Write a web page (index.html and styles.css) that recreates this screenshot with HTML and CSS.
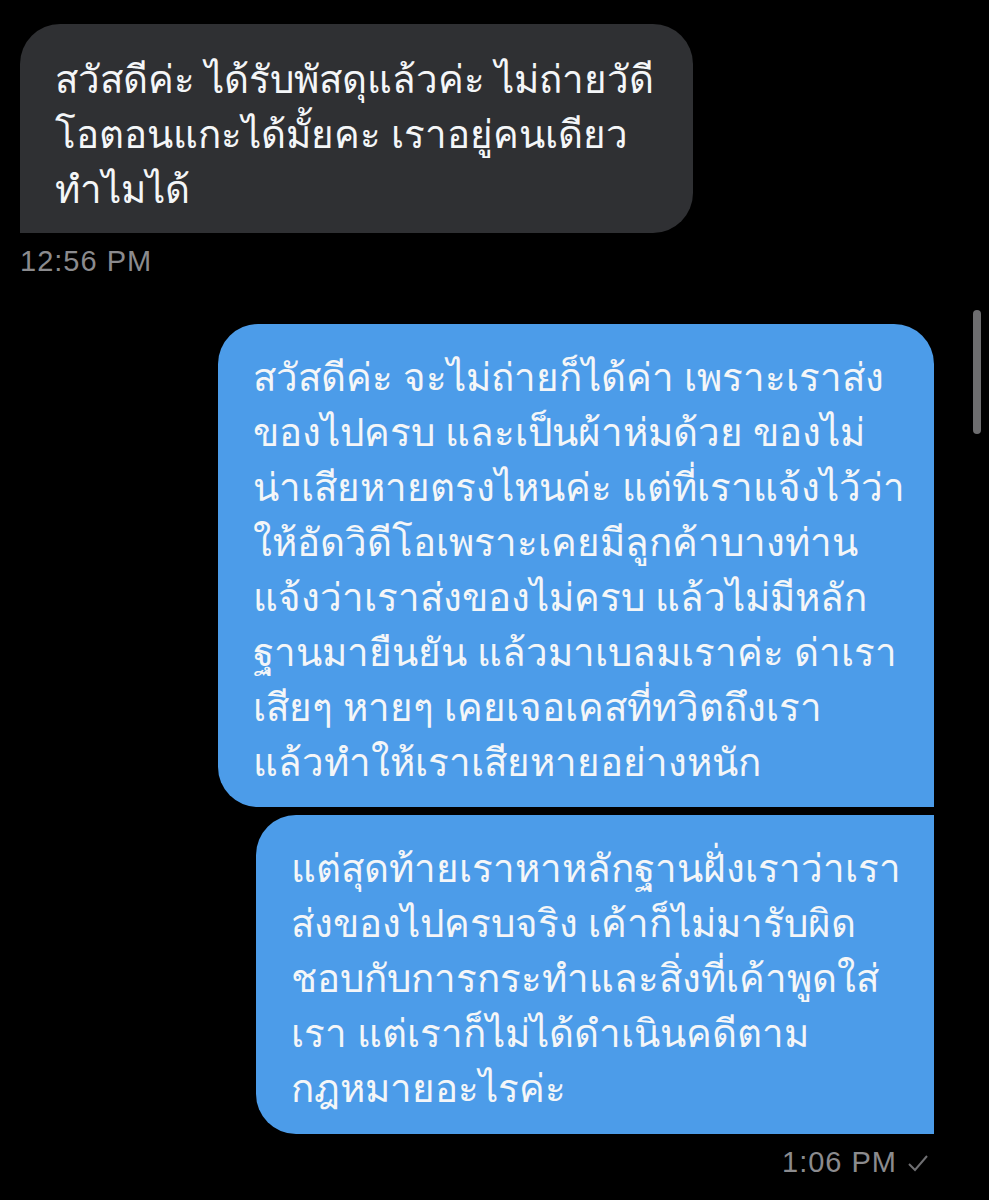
FILE: index.html
```html
<!DOCTYPE html>
<html lang="th">
<head>
    <meta charset="UTF-8">
    <meta name="viewport" content="width=device-width, initial-scale=1.0">
    <title>ข้อความ</title>
    <link rel="stylesheet" href="styles.css">
</head>
<body>
    <div class="chat">
        <div class="msg msg-in">
            <div class="bubble bubble-in">
                สวัสดีค่ะ ได้รับพัสดุแล้วค่ะ ไม่ถ่ายวัดี<br>
                โอตอนแกะได้มั้ยคะ เราอยู่คนเดียว<br>
                ทำไมได้
            </div>
            <div class="time">12:56 PM</div>
        </div>

        <div class="msg msg-out">
            <div class="bubble bubble-out first">
                สวัสดีค่ะ จะไม่ถ่ายก็ได้ค่า เพราะเราส่ง<br>
                ของไปครบ และเป็นผ้าห่มด้วย ของไม่<br>
                น่าเสียหายตรงไหนค่ะ แต่ที่เราแจ้งไว้ว่า<br>
                ให้อัดวิดีโอเพราะเคยมีลูกค้าบางท่าน<br>
                แจ้งว่าเราส่งของไม่ครบ แล้วไม่มีหลัก<br>
                ฐานมายืนยัน แล้วมาเบลมเราค่ะ ด่าเรา<br>
                เสียๆ หายๆ เคยเจอเคสที่ทวิตถึงเรา<br>
                แล้วทำให้เราเสียหายอย่างหนัก
            </div>
            <div class="bubble bubble-out last">
                แต่สุดท้ายเราหาหลักฐานฝั่งเราว่าเรา<br>
                ส่งของไปครบจริง เค้าก็ไม่มารับผิด<br>
                ชอบกับการกระทำและสิ่งที่เค้าพูดใส่<br>
                เรา แต่เราก็ไม่ได้ดำเนินคดีตาม<br>
                กฎหมายอะไรค่ะ
            </div>
            <div class="time">
                1:06 PM
                <svg class="check" width="22" height="18" viewBox="0 0 22 18">
                    <path d="M2 10 L8 16 L20 2" fill="none" stroke="#6f6f72" stroke-width="2"/>
                </svg>
            </div>
        </div>
    </div>
    <div class="scrollbar"></div>
</body>
</html>
```

FILE: styles.css
```css
body {
    margin: 0;
    background-color: #000;
    font-family: "Noto Sans", "DejaVu Sans", sans-serif;
    color: #fff;
}

.chat {
    display: flex;
    flex-direction: column;
    padding: 24px 55px 0 20px;
}

.msg {
    display: flex;
    flex-direction: column;
}

.msg-in {
    align-items: flex-start;
}

.msg-out {
    align-items: flex-end;
    margin-top: 46px;
}

.bubble {
    font-size: 38.5px;
    line-height: 55px;
    white-space: nowrap;
    box-sizing: border-box;
    color: #f4f6f8;
}

.bubble-in {
    background-color: #2f3033;
    width: 673px;
    height: 209px;
    padding: 27px 35px;
    border-radius: 40px 40px 40px 0;
}

.bubble-out {
    background-color: #4c9ce9;
    padding: 25px 35px;
}

.bubble-out.first {
    width: 716px;
    height: 483px;
    border-radius: 40px 40px 0 40px;
}

.bubble-out.last {
    width: 678px;
    height: 319px;
    margin-top: 8px;
    border-radius: 40px 0 0 40px;
}

.time {
    display: flex;
    align-items: center;
    gap: 10px;
    font-family: "Liberation Sans", Arial, sans-serif;
    font-size: 29px;
    letter-spacing: 1px;
    color: #8b8b8e;
    margin-top: 12px;
}

.msg-out .time {
    margin-right: 5px;
}

.scrollbar {
    position: absolute;
    left: 973px;
    top: 310px;
    width: 8px;
    height: 124px;
    border-radius: 4px;
    background-color: #6d6d6f;
}
```
